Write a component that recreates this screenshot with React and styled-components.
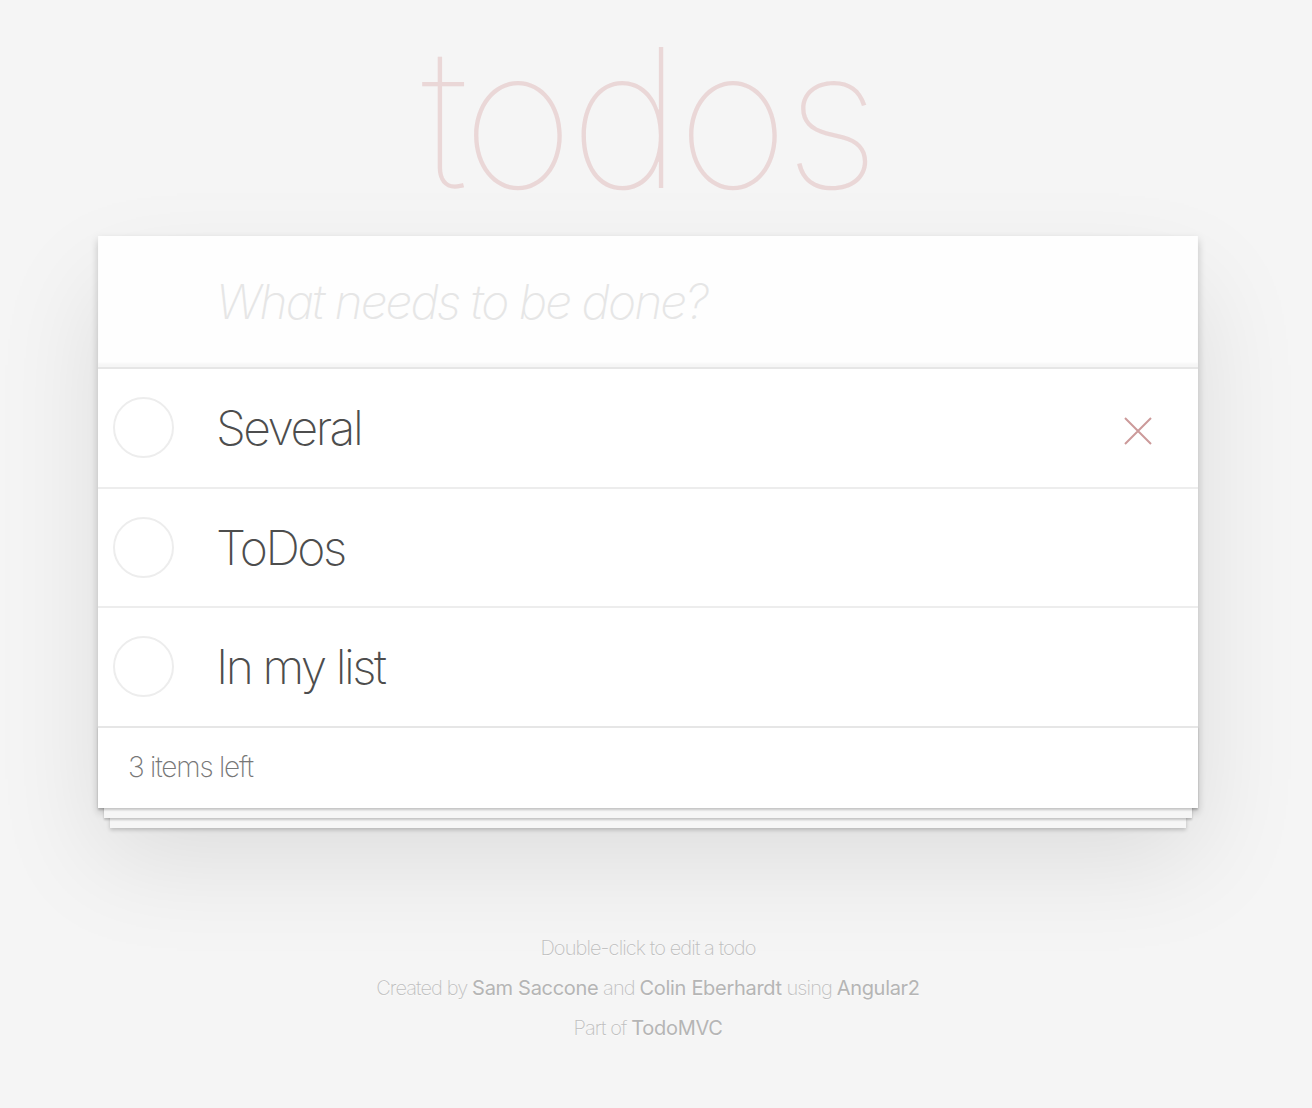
import React from "react";
import styled, { createGlobalStyle } from "styled-components";

const GlobalStyle = createGlobalStyle`
  html, body { margin: 0; padding: 0; }
  body {
    width: 1296px;
    background: #f5f5f5;
    color: #4d4d4d;
    font-family: Inter, "Helvetica Neue", Helvetica, Arial, sans-serif;
    font-weight: 300;
    font-size: 28px;
    line-height: 1.4em;
    -webkit-font-smoothing: antialiased;
  }
`;

const Page = styled.div`
  width: 1100px;
  margin: 0 auto;
`;

const Title = styled.h1`
  margin: 0;
  font-size: 194px;
  line-height: 236px;
  font-weight: 100;
  letter-spacing: -5px;
  text-align: center;
  color: rgba(175, 47, 47, 0.15);
  text-rendering: optimizeLegibility;
`;

const TodoApp = styled.section`
  position: relative;
  background: #fff;
  box-shadow: 0 4px 8px 0 rgba(0, 0, 0, 0.2), 0 50px 100px 0 rgba(0, 0, 0, 0.1);
`;

const NewTodo = styled.input`
  display: block;
  width: 100%;
  box-sizing: border-box;
  margin: 0;
  padding: 32px 32px 32px 118px;
  border: none;
  outline: none;
  font-family: inherit;
  font-size: 48px;
  font-weight: 200;
  letter-spacing: -2px;
  line-height: 1.4em;
  height: 131px;
  color: #4d4d4d;
  background: rgba(0, 0, 0, 0.003);
  box-shadow: inset 0 -4px 2px rgba(0, 0, 0, 0.03);
  &::placeholder {
    font-style: italic;
    font-weight: 200;
    color: #e6e6e6;
  }
`;

const List = styled.ul`
  margin: 0;
  padding: 0;
  list-style: none;
  border-top: 2px solid #e6e6e6;
`;

const Item = styled.li`
  display: flex;
  align-items: center;
  font-size: 48px;
  border-bottom: 2px solid #ededed;
  &:last-child { border-bottom: none; }
`;

const Toggle = styled.span`
  flex: none;
  width: 61px;
  height: 61px;
  margin-left: 15px;
  box-sizing: border-box;
  border: 2px solid #ededed;
  border-radius: 50%;
`;

const Label = styled.label`
  flex: 1;
  display: block;
  padding: 30px 0 30px 42px;
  line-height: 1.2;
  letter-spacing: -2.5px;
  color: #4d4d4d;
  font-weight: 200;
`;

const Destroy = styled.button`
  flex: none;
  width: 80px;
  height: 80px;
  margin: 6px 20px 0 0;
  padding: 0;
  border: none;
  background: none;
  display: flex;
  align-items: center;
  justify-content: center;
  visibility: ${(p) => (p.$visible ? "visible" : "hidden")};
`;

const Footer = styled.footer`
  display: flex;
  align-items: center;
  height: 40px;
  padding: 20px 30px;
  border-top: 2px solid #e6e6e6;
  color: #777;
  box-shadow: 0 2px 2px rgba(0, 0, 0, 0.2),
    0 16px 0 -6px #f6f6f6,
    0 18px 2px -6px rgba(0, 0, 0, 0.2),
    0 32px 0 -12px #f6f6f6,
    0 34px 4px -12px rgba(0, 0, 0, 0.2);
`;

const Count = styled.span`
  font-size: 28px;
  font-weight: 200;
  letter-spacing: -1.2px;
  line-height: 39.2px;
`;

const Info = styled.footer`
  margin-top: 130px;
  text-align: center;
  font-size: 20px;
  font-weight: 200;
  letter-spacing: -0.9px;
  color: #bfbfbf;
  text-shadow: 0 1px 0 rgba(255, 255, 255, 0.5);
`;

const InfoLine = styled.p`
  margin: 20px 0;
  line-height: 1;
`;

const Link = styled.a`
  color: #b5b5b5;
  font-weight: 400;
  letter-spacing: -0.3px;
  text-decoration: none;
`;

const CloseIcon = () => (
  <svg width="28" height="28" viewBox="0 0 28 28">
    <path d="M1 1 L27 27 M27 1 L1 27" stroke="#cc9a9a" strokeWidth="2" fill="none" />
  </svg>
);

const todos = ["Several", "ToDos", "In my list"];

export default function App() {
  return (
    <>
      <GlobalStyle />
      <Page>
        <Title>todos</Title>
        <TodoApp>
          <NewTodo placeholder="What needs to be done?" />
          <List>
            {todos.map((t, i) => (
              <Item key={t}>
                <Toggle />
                <Label>{t}</Label>
                <Destroy $visible={i === 0}>
                  <CloseIcon />
                </Destroy>
              </Item>
            ))}
          </List>
          <Footer>
            <Count>3 items left</Count>
          </Footer>
        </TodoApp>
        <Info>
          <InfoLine>Double-click to edit a todo</InfoLine>
          <InfoLine>
            Created by <Link>Sam Saccone</Link> and <Link>Colin Eberhardt</Link> using{" "}
            <Link>Angular2</Link>
          </InfoLine>
          <InfoLine>
            Part of <Link>TodoMVC</Link>
          </InfoLine>
        </Info>
      </Page>
    </>
  );
}
